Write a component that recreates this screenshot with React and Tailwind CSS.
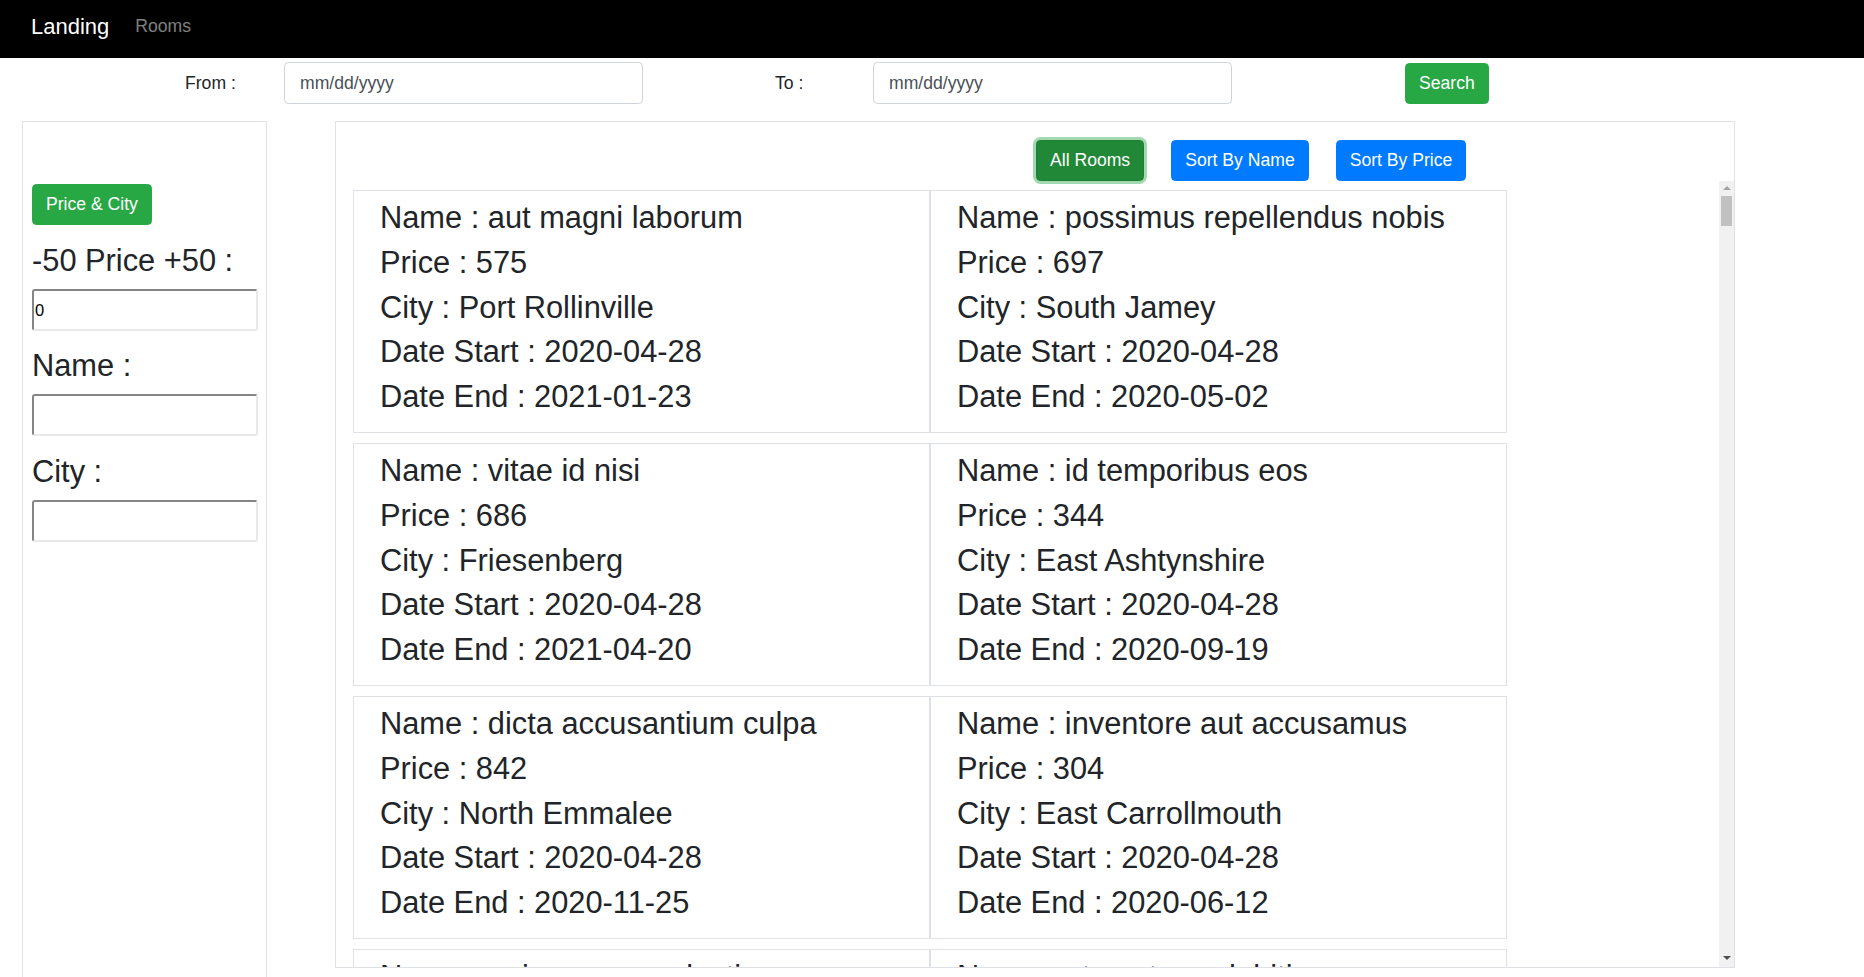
import React from 'react';

const rooms = [
  { name: 'aut magni laborum', price: 575, city: 'Port Rollinville', start: '2020-04-28', end: '2021-01-23' },
  { name: 'possimus repellendus nobis', price: 697, city: 'South Jamey', start: '2020-04-28', end: '2020-05-02' },
  { name: 'vitae id nisi', price: 686, city: 'Friesenberg', start: '2020-04-28', end: '2021-04-20' },
  { name: 'id temporibus eos', price: 344, city: 'East Ashtynshire', start: '2020-04-28', end: '2020-09-19' },
  { name: 'dicta accusantium culpa', price: 842, city: 'North Emmalee', start: '2020-04-28', end: '2020-11-25' },
  { name: 'inventore aut accusamus', price: 304, city: 'East Carrollmouth', start: '2020-04-28', end: '2020-06-12' },
  { name: 'quia rerum molestias', price: 512, city: 'West Ardella', start: '2020-04-28', end: '2020-10-03' },
  { name: 'et nostrum debitis', price: 431, city: 'Lake Bradly', start: '2020-04-28', end: '2020-08-14' },
];

function RoomCard({ room }) {
  return (
    <div className="h-[243px] border border-[#dee2e6] px-[26px] pt-[5px] text-[30.8px] leading-[44.8px]">
      <div>Name : {room.name}</div>
      <div>Price : {room.price}</div>
      <div>City : {room.city}</div>
      <div>Date Start : {room.start}</div>
      <div>Date End : {room.end}</div>
    </div>
  );
}

function SideInput({ value }) {
  return (
    <input
      type="text"
      defaultValue={value}
      className="mt-[10px] block h-[42px] w-[226px] rounded-[3px] border-2 border-t-[#858585] border-l-[#858585] border-b-[#e9e9e9] border-r-[#e9e9e9] pl-[1px] text-[16.5px] text-black outline-none"
    />
  );
}

export default function App() {
  return (
    <div className="h-screen overflow-hidden bg-white font-['Liberation_Sans',Arial,sans-serif] text-[#212529]">
      {/* navbar */}
      <nav className="flex h-[58px] items-center bg-black pb-[6px] pl-[31px]">
        <span className="text-[22px] text-white">Landing</span>
        <span className="ml-[26px] text-[17.6px] text-white/50">Rooms</span>
      </nav>

      {/* date filter row */}
      <div className="mt-[4px] flex h-[42px] items-center pl-[185px] text-[17.6px]">
        <span className="w-[99px] shrink-0">From :</span>
        <input
          type="text"
          placeholder="mm/dd/yyyy"
          className="h-[42px] w-[359px] shrink-0 rounded-[4.4px] border border-[#ced4da] px-[15px] text-[17.6px] outline-none placeholder:text-[#495057]"
        />
        <span className="ml-[132px] w-[98px] shrink-0">To :</span>
        <input
          type="text"
          placeholder="mm/dd/yyyy"
          className="h-[42px] w-[359px] shrink-0 rounded-[4.4px] border border-[#ced4da] px-[15px] text-[17.6px] outline-none placeholder:text-[#495057]"
        />
        <button className="ml-[173px] h-[41px] rounded-[4.4px] border border-[#28a745] bg-[#28a745] px-[13px] leading-[26.4px] text-white">
          Search
        </button>
      </div>

      <div className="mt-[17px] flex items-start">
        {/* sidebar */}
        <div className="ml-[22px] h-[900px] w-[245px] shrink-0 border border-[#dee2e6] px-[9px] pt-[62px]">
          <button className="h-[41px] rounded-[4.4px] border border-[#28a745] bg-[#28a745] px-[13px] text-[17.6px] leading-[26.4px] text-white">
            Price &amp; City
          </button>
          <div className="mt-[17px] h-[37px] text-[30.8px] leading-[37px]">-50 Price +50 :</div>
          <SideInput value="0" />
          <div className="mt-[16px] h-[37px] text-[30.8px] leading-[37px]">Name :</div>
          <SideInput value="" />
          <div className="mt-[17px] h-[37px] text-[30.8px] leading-[37px]">City :</div>
          <SideInput value="" />
        </div>

        {/* rooms panel */}
        <div className="ml-[68px] flex h-[847px] w-[1400px] shrink-0 flex-col border border-[#dee2e6]">
          <div className="flex gap-[27px] pl-[700px] pt-[18px] text-[17.6px] leading-[26.4px]">
            <button className="h-[41px] rounded-[4.4px] border border-[#1e7e34] bg-[#218838] px-[13px] text-white shadow-[0_0_0_3px_rgba(72,180,97,0.5)]">
              All Rooms
            </button>
            <button className="h-[41px] rounded-[4.4px] border border-[#007bff] bg-[#007bff] px-[13px] text-white">
              Sort By Name
            </button>
            <button className="h-[41px] rounded-[4.4px] border border-[#007bff] bg-[#007bff] px-[13px] text-white">
              Sort By Price
            </button>
          </div>

          <div className="flex min-h-0 flex-1">
            <div className="min-w-0 flex-1 overflow-hidden pl-[17px] pt-[9px]">
              <div className="grid grid-cols-[577px_577px] gap-y-[10px]">
                {rooms.map((room) => (
                  <RoomCard key={room.name} room={room} />
                ))}
              </div>
            </div>

            {/* scrollbar */}
            <div className="flex w-[15px] shrink-0 flex-col items-center bg-[#f1f1f1]">
              <div className="mt-[5px] h-0 w-0 border-x-[4px] border-b-[4px] border-x-transparent border-b-[#a3a3a3]" />
              <div className="mt-[6px] h-[30px] w-[11px] bg-[#c1c1c1]" />
              <div className="flex-1" />
              <div className="mb-[7px] h-0 w-0 border-x-[4px] border-t-[4px] border-x-transparent border-t-[#505050]" />
            </div>
          </div>
        </div>
      </div>
    </div>
  );
}
